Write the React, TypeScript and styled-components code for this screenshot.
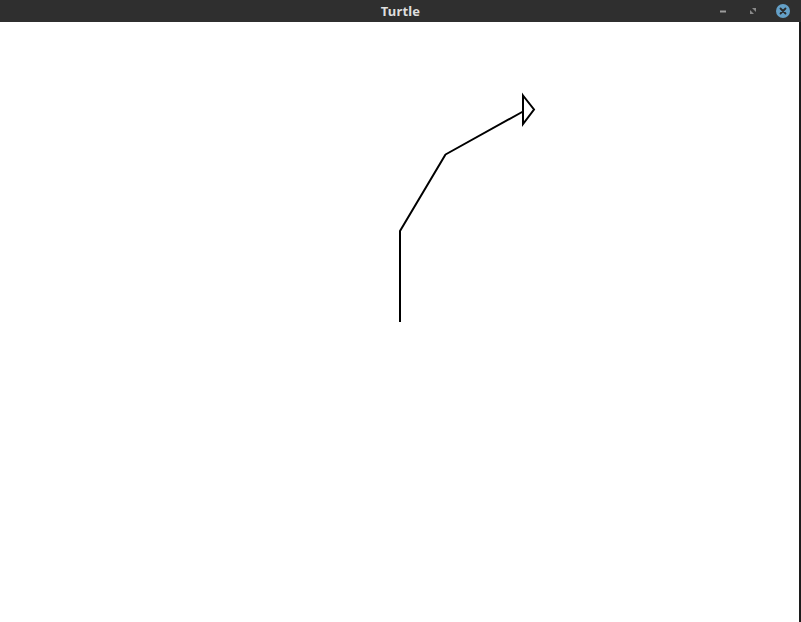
import React from "react";
import styled, { createGlobalStyle } from "styled-components";

const GlobalStyle = createGlobalStyle`
  html, body {
    margin: 0;
    padding: 0;
    background: #ffffff;
    overflow: hidden;
  }
`;

const Window = styled.div`
  display: flex;
  flex-direction: column;
  width: 801px;
  height: 622px;
  font-family: "Noto Sans", "DejaVu Sans", sans-serif;
`;

const TitleBar = styled.div`
  position: relative;
  display: flex;
  align-items: center;
  justify-content: center;
  height: 22px;
  background: #2f2f2f;
  flex-shrink: 0;
`;

const Title = styled.div`
  color: #dedede;
  font-size: 13px;
  font-weight: 700;
  letter-spacing: 0.2px;
  line-height: 22px;
`;

const Controls = styled.div`
  position: absolute;
  right: 11px;
  top: 0;
  height: 22px;
  display: flex;
  align-items: center;
  gap: 16px;
`;

const ControlButton = styled.div<{ close?: boolean }>`
  width: 14px;
  height: 14px;
  display: flex;
  align-items: center;
  justify-content: center;
  border-radius: 50%;
  background: ${props => (props.close ? "#64a0c8" : "transparent")};
`;

const Body = styled.div`
  display: flex;
  flex: 1;
`;

const Canvas = styled.div`
  flex: 1;
  background: #ffffff;
`;

const Edge = styled.div`
  width: 2px;
  background: #1c1c1c;
`;

const TurtlePath = () => (
  <svg width="799" height="600" viewBox="0 0 799 600">
    <polyline
      points="400,300 400,209 445.5,132.5 523,89.5"
      fill="none"
      stroke="#000"
      strokeWidth="2"
      strokeLinejoin="round"
    />
    <polygon
      points="523,73.5 534,87.5 523,102"
      fill="#fff"
      stroke="#000"
      strokeWidth="2"
      strokeLinejoin="miter"
    />
  </svg>
);

export default function App() {
  return (
    <>
      <GlobalStyle />
      <Window>
        <TitleBar>
          <Title>Turtle</Title>
          <Controls>
            <ControlButton>
              <svg width="8" height="3" viewBox="0 0 8 3">
                <rect x="1" y="0.5" width="6" height="2" fill="#9c9c9c" />
              </svg>
            </ControlButton>
            <ControlButton>
              <svg width="8" height="8" viewBox="0 0 8 8">
                <path d="M3 1h4v4z" fill="#8a8a8a" />
                <path d="M1 3l4 4H1z" fill="#8a8a8a" />
              </svg>
            </ControlButton>
            <ControlButton close>
              <svg width="8" height="8" viewBox="0 0 8 8">
                <path
                  d="M1.5 1.5l5 5M6.5 1.5l-5 5"
                  stroke="#2a2a2a"
                  strokeWidth="1.8"
                  strokeLinecap="round"
                />
              </svg>
            </ControlButton>
          </Controls>
        </TitleBar>
        <Body>
          <Canvas>
            <TurtlePath />
          </Canvas>
          <Edge />
        </Body>
      </Window>
    </>
  );
}
